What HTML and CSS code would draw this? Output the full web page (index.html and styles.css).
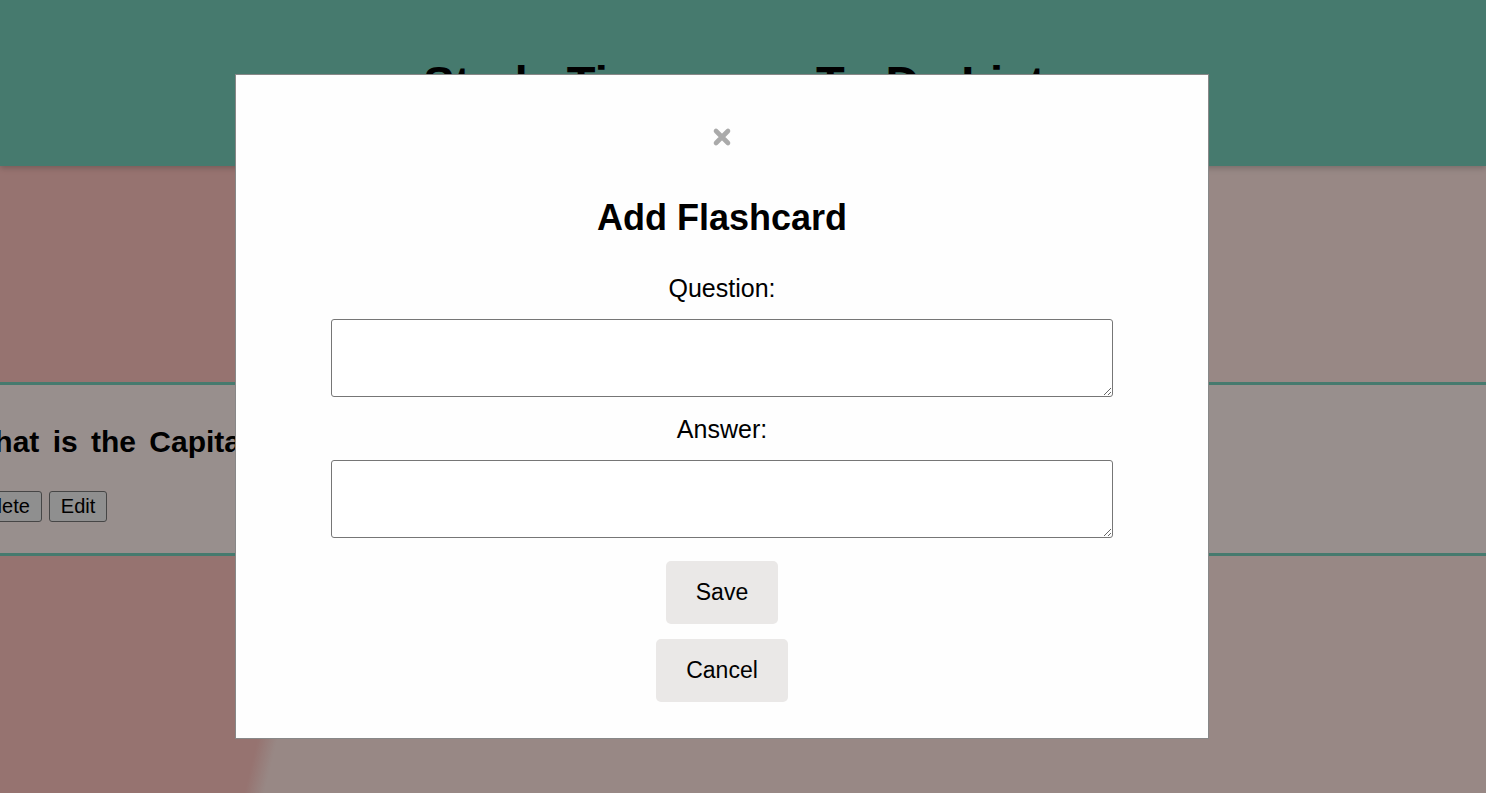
FILE: index.html
```html
<!DOCTYPE html>
<html lang="en">
<head>
<meta charset="utf-8">
<title>Flashcards</title>
<link rel="stylesheet" href="styles.css">
</head>
<body>
<header class="site-header">
  <nav class="nav">
    <a class="nav-link" href="#">Study Timer</a>
    <a class="nav-link" href="#">To-Do List</a>
  </nav>
</header>
<main class="main">
  <section class="card">
    <div class="card-inner">
      <h3 class="card-question">What is the Capital of France?</h3>
      <div class="card-actions">
        <button class="card-btn" type="button">Delete</button>
        <button class="card-btn" type="button">Edit</button>
      </div>
    </div>
  </section>
</main>
<div class="overlay">
  <div class="modal">
    <div class="close-row">
      <svg class="close-icon" width="20" height="20" viewBox="0 0 20 20" aria-label="Close">
        <path d="M4 4 L16 16 M16 4 L4 16" stroke="#aaaaaa" stroke-width="4.6" stroke-linecap="round" fill="none"/>
      </svg>
    </div>
    <h2 class="modal-title">Add Flashcard</h2>
    <label class="field-label" for="q">Question:</label>
    <textarea id="q" class="field"></textarea>
    <label class="field-label field-label-answer" for="a">Answer:</label>
    <textarea id="a" class="field"></textarea>
    <button class="modal-btn modal-btn-save" type="button">Save</button>
    <button class="modal-btn modal-btn-cancel" type="button">Cancel</button>
  </div>
</div>
</body>
</html>
```
FILE: styles.css
```css
* {
  box-sizing: border-box;
}

html, body {
  margin: 0;
  padding: 0;
}

body {
  font-family: "Comic Sans MS", "Liberation Sans", sans-serif;
  color: #000;
  overflow: hidden;
  height: 100vh;
}

.site-header {
  position: relative;
  z-index: 1;
  height: 166px;
  background: #75cbb8;
  box-shadow: 0 2px 6px rgba(0, 0, 0, 0.22);
  padding-top: 55px;
  padding-right: 18px;
}

.nav {
  display: flex;
  justify-content: center;
  gap: 122px;
}

.nav-link {
  font-size: 47px;
  font-weight: bold;
  line-height: 56px;
  color: #000;
  text-decoration: none;
}

.main {
  min-height: calc(100vh - 166px);
  padding-top: 216px;
  background: linear-gradient(103.8deg, #fbc0bb 24.3%, #fde3de 25.5%);
}

.card {
  background: #fdeeeb;
  border-top: 3px solid #75cbb8;
  border-bottom: 3px solid #75cbb8;
  padding: 39px 0 31px;
  overflow: hidden;
}

.card-inner {
  margin-left: -40px;
}

.card-question {
  margin: 0;
  padding-left: 6px;
  font-size: 30px;
  line-height: 36px;
  font-weight: bold;
  word-spacing: 5px;
  white-space: nowrap;
}

.card-actions {
  display: flex;
  gap: 7px;
  margin-top: 31px;
}

.card-btn {
  font-family: "Liberation Sans", Arial, sans-serif;
  font-size: 20px;
  line-height: 23px;
  padding: 3px 11px;
  background: #efefef;
  border: 1px solid #767676;
  border-radius: 3px;
  color: #000;
}

.overlay {
  position: fixed;
  inset: 0;
  z-index: 10;
  background: rgba(0, 0, 0, 0.4);
}

.modal {
  width: 974px;
  margin: 74px 0 0 235px;
  background: #fefefe;
  border: 1px solid #888;
  padding: 48px 0 36px;
  display: flex;
  flex-direction: column;
  align-items: center;
}

.close-row {
  height: 28px;
  display: flex;
  align-items: center;
  justify-content: center;
}

.close-icon {
  display: block;
}

.modal-title {
  margin: 45px 0 0;
  font-size: 36px;
  line-height: 44px;
  font-weight: bold;
}

.field-label {
  margin-top: 33px;
  font-size: 25px;
  line-height: 30px;
}

.field-label-answer {
  margin-top: 17px;
}

.field {
  margin-top: 16px;
  width: 782px;
  height: 78px;
  border: 1px solid #767676;
  border-radius: 3px;
  background: #fff;
  font-family: "Liberation Mono", monospace;
  font-size: 13px;
  padding: 2px;
}

.modal-btn {
  font-family: "Comic Sans MS", "Liberation Sans", sans-serif;
  font-size: 23px;
  height: 63px;
  line-height: 63px;
  padding: 0 30px;
  border: none;
  border-radius: 5px;
  background: #eae8e7;
  color: #000;
}

.modal-btn-save {
  margin-top: 23px;
}

.modal-btn-cancel {
  margin-top: 15px;
}
```
